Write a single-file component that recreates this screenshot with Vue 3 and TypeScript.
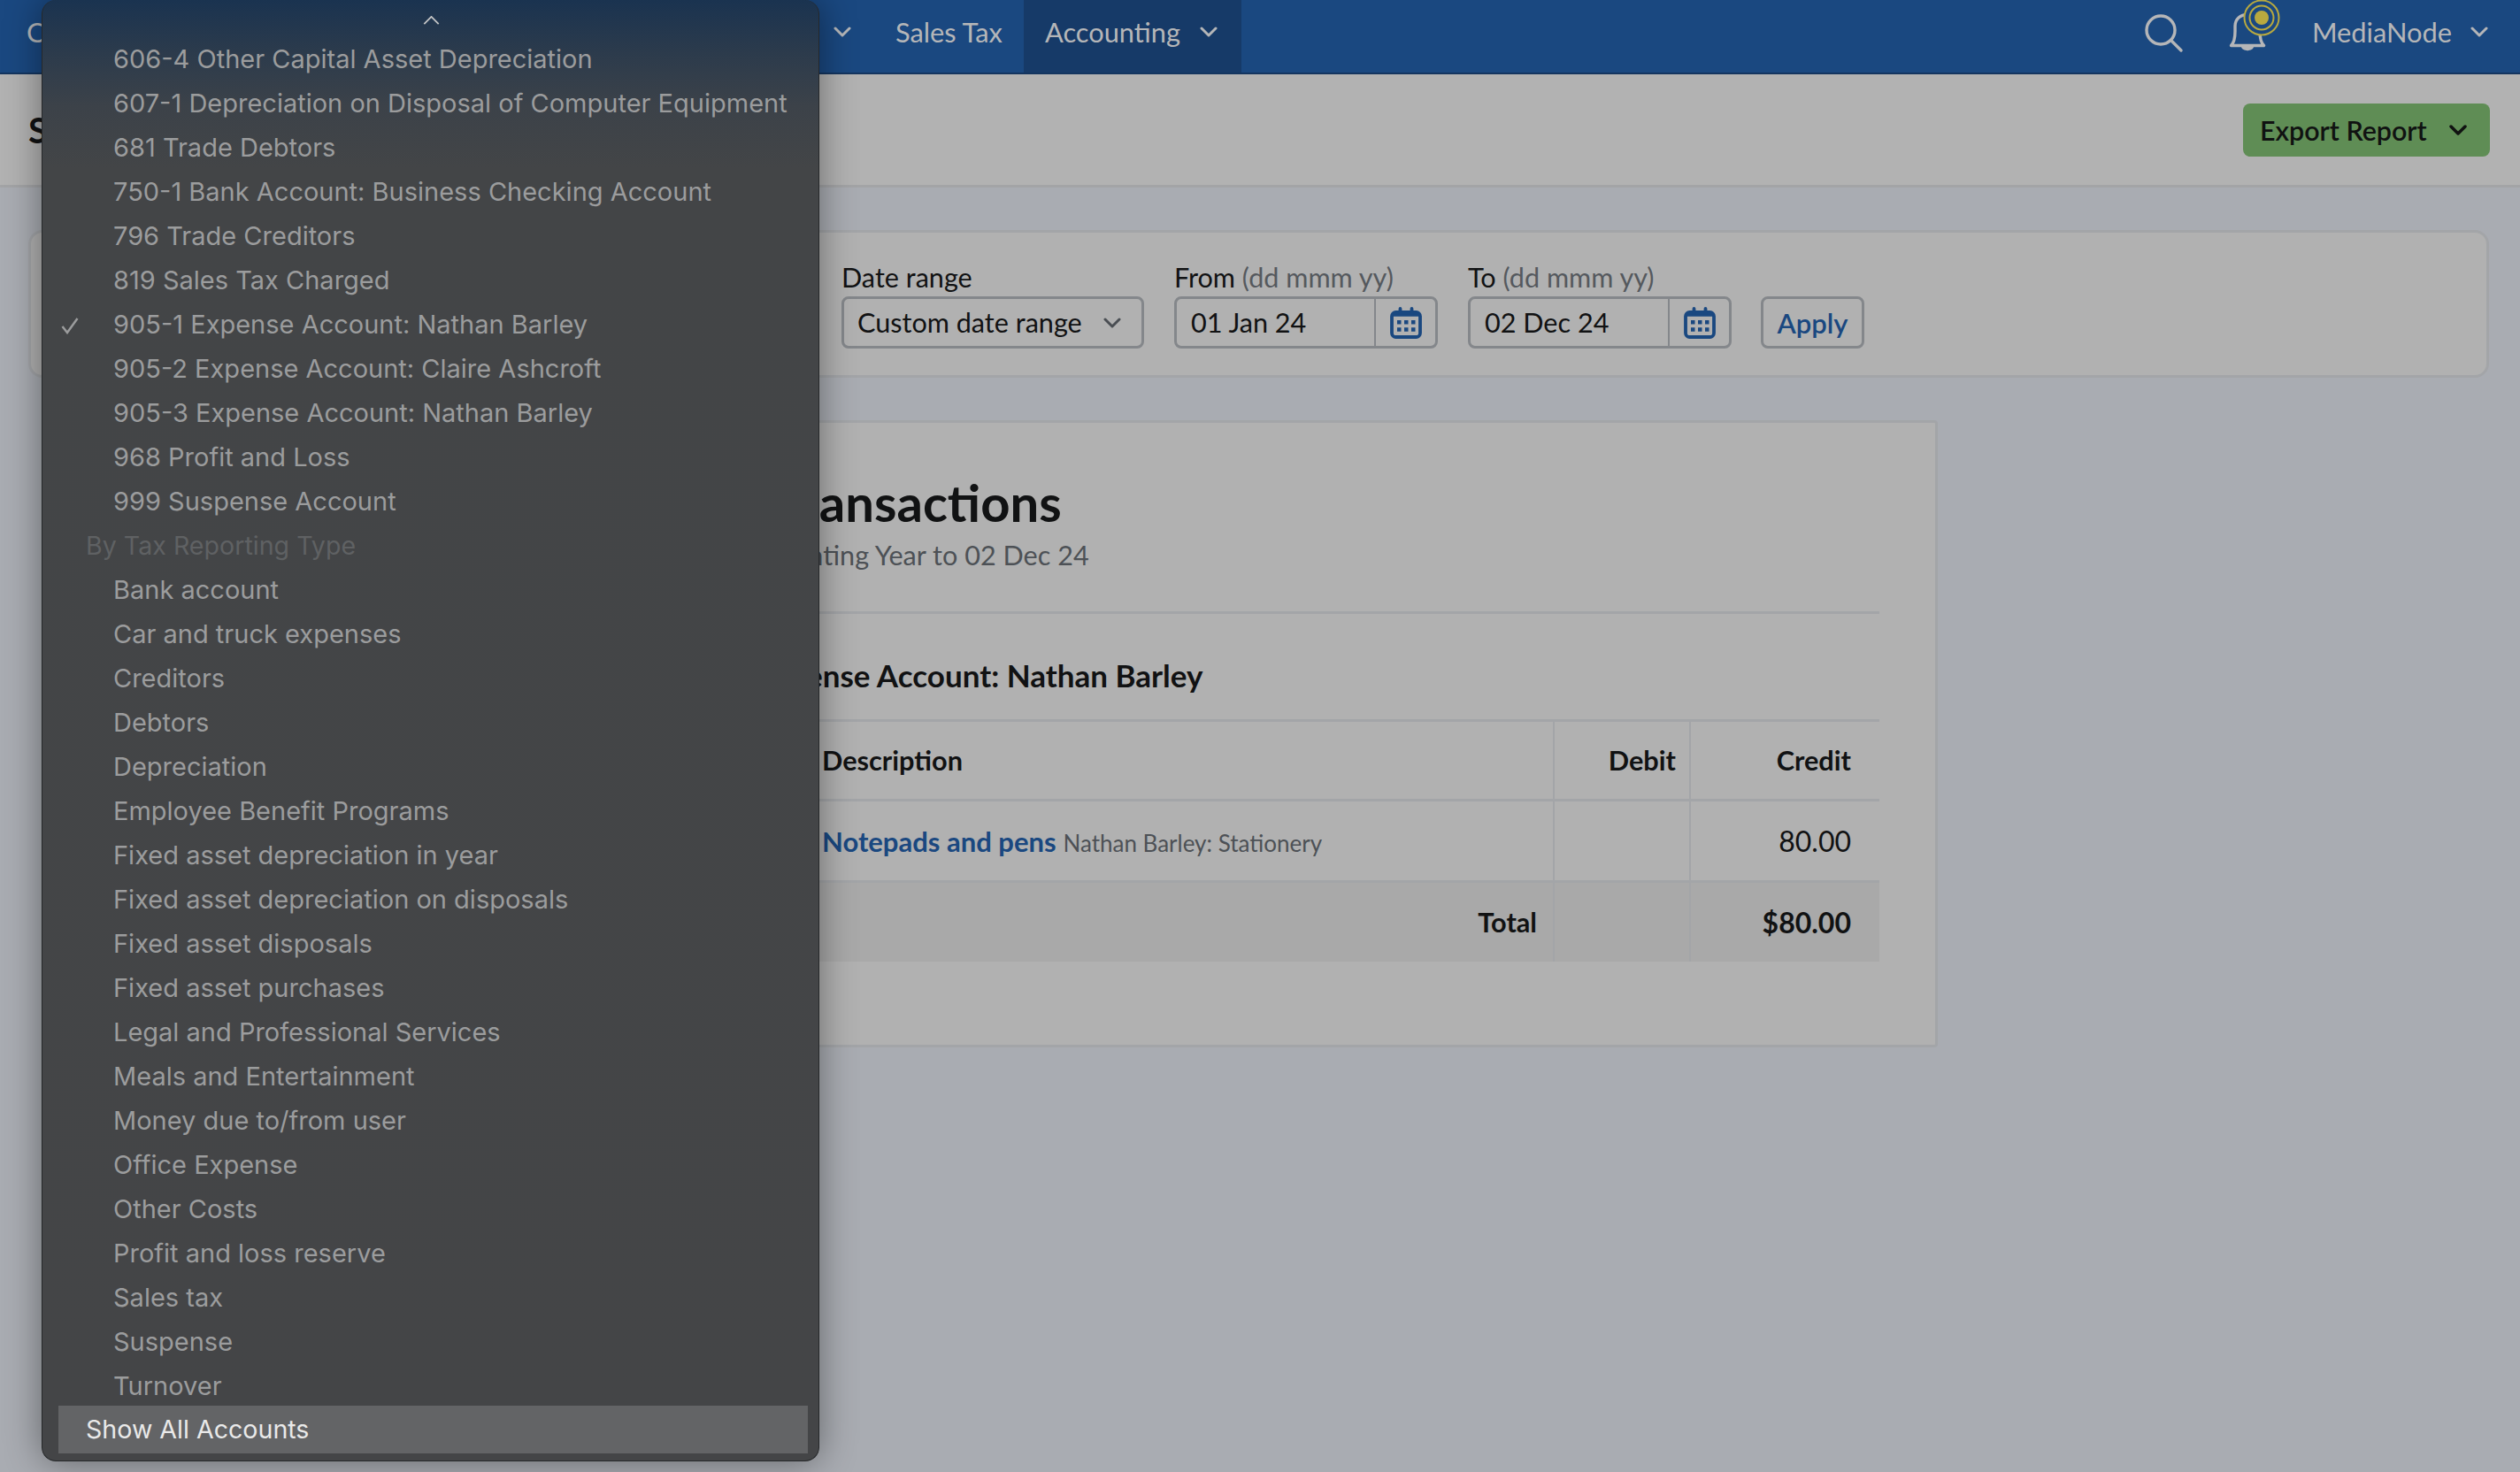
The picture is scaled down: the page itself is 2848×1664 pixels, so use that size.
<script setup lang="ts">
interface MenuRow { label: string; kind: 'item' | 'header' | 'checked' }
const names: string[] = [
  '606-4 Other Capital Asset Depreciation',
  '607-1 Depreciation on Disposal of Computer Equipment',
  '681 Trade Debtors',
  '750-1 Bank Account: Business Checking Account',
  '796 Trade Creditors',
  '819 Sales Tax Charged',
  '905-1 Expense Account: Nathan Barley',
  '905-2 Expense Account: Claire Ashcroft',
  '905-3 Expense Account: Nathan Barley',
  '968 Profit and Loss',
  '999 Suspense Account',
  'By Tax Reporting Type',
  'Bank account',
  'Car and truck expenses',
  'Creditors',
  'Debtors',
  'Depreciation',
  'Employee Benefit Programs',
  'Fixed asset depreciation in year',
  'Fixed asset depreciation on disposals',
  'Fixed asset disposals',
  'Fixed asset purchases',
  'Legal and Professional Services',
  'Meals and Entertainment',
  'Money due to/from user',
  'Office Expense',
  'Other Costs',
  'Profit and loss reserve',
  'Sales tax',
  'Suspense',
  'Turnover',
]
const rows: MenuRow[] = names.map((label) => ({
  label,
  kind: label.startsWith('By Tax') ? 'header' : label === '905-1 Expense Account: Nathan Barley' ? 'checked' : 'item',
}))
</script>

<template>
  <div class="page">
    <header class="nav">
      <div class="nav-hidden">
        <span class="nav-text">Contacts</span>
        <svg class="nav-chev" viewBox="0 0 20 12"><path d="M2 2l8 8 8-8" /></svg>
      </div>
      <span class="nav-item nav-text">Sales Tax</span>
      <span class="nav-item active nav-text">
        Accounting
        <svg class="nav-chev" viewBox="0 0 20 12"><path d="M2 2l8 8 8-8" /></svg>
      </span>
      <div class="nav-right">
        <svg class="search" viewBox="0 0 44 44"><circle cx="18" cy="18" r="16" /><path d="M29.500 29.500L41 41" /></svg>
        <svg class="bell" viewBox="0 0 48 60">
          <path class="bell-body" d="M1.500 51.500c3-3 4.500-7 4.500-16v-6c0-8 6-13 14-13s14 5 14 13v6c0 9 1.500 13 4.500 16z" />
          <path class="bell-clap" d="M13 53c1 5.500 13 5.500 14 0z" />
          <circle class="ring outer" cx="36" cy="20" r="19.500" />
          <circle class="ring" cx="36" cy="20" r="13.500" />
          <circle class="dot" cx="36" cy="20" r="8" />
        </svg>
        <span class="user nav-text">MediaNode</span>
        <svg class="nav-chev" viewBox="0 0 20 12"><path d="M2 2l8 8 8-8" /></svg>
      </div>
    </header>

    <section class="subhead">
      <h1 class="subhead-title">Statements</h1>
      <button class="export">
        Export Report
        <svg class="export-chev" viewBox="0 0 20 12"><path d="M2 2l8 8 8-8" /></svg>
      </button>
    </section>

    <section class="filters">
      <div class="field account">
        <label class="label">Account</label>
        <div class="select"><span>905-1 Expense Account</span></div>
      </div>
      <div class="field">
        <label class="label">Date range</label>
        <div class="select range">
          <span>Custom date range</span>
          <svg class="sel-chev" viewBox="0 0 20 12"><path d="M2 2l8 8 8-8" /></svg>
        </div>
      </div>
      <div class="field">
        <label class="label">From <em>(dd mmm yy)</em></label>
        <div class="date">
          <span class="date-value">01 Jan 24</span>
          <span class="date-btn">
            <svg class="cal" viewBox="0 0 36 36"><rect x="2" y="6" width="32" height="28" rx="4.500" /><path class="cal-top" d="M3 8.500h30" /><path class="cal-pins" d="M11.500 2v6M24.500 2v6" /><path class="cal-dots" d="M8 17.300h4.500M16 17.300h4.500M24 17.300h4.500M8 25.500h4.500M16 25.500h4.500M24 25.500h4.500" /></svg>
          </span>
        </div>
      </div>
      <div class="field">
        <label class="label">To <em>(dd mmm yy)</em></label>
        <div class="date">
          <span class="date-value">02 Dec 24</span>
          <span class="date-btn">
            <svg class="cal" viewBox="0 0 36 36"><rect x="2" y="6" width="32" height="28" rx="4.500" /><path class="cal-top" d="M3 8.500h30" /><path class="cal-pins" d="M11.500 2v6M24.500 2v6" /><path class="cal-dots" d="M8 17.300h4.500M16 17.300h4.500M24 17.300h4.500M8 25.500h4.500M16 25.500h4.500M24 25.500h4.500" /></svg>
          </span>
        </div>
      </div>
      <button class="apply">Apply</button>
    </section>

    <main class="report">
      <h2 class="report-title">Account Transactions</h2>
      <p class="report-sub">Start of Accounting Year to 02 Dec 24</p>
      <h3 class="report-account">905-1 Expense Account: Nathan Barley</h3>
      <table class="table">
        <thead>
          <tr>
            <th class="c-date">Date</th>
            <th class="c-desc">Description</th>
            <th class="c-debit num">Debit</th>
            <th class="c-credit num">Credit</th>
          </tr>
        </thead>
        <tbody>
          <tr>
            <td class="c-date">12 Mar 24</td>
            <td class="c-desc"><a class="link">Notepads and pens</a> <small>Nathan Barley: Stationery</small></td>
            <td class="c-debit num"></td>
            <td class="c-credit num digits">80.00</td>
          </tr>
        </tbody>
        <tfoot>
          <tr>
            <td colspan="2" class="num">Total</td>
            <td class="c-debit num"></td>
            <td class="c-credit num digits">$80.00</td>
          </tr>
        </tfoot>
      </table>
    </main>

    <div class="menu">
      <svg class="menu-up" viewBox="0 0 20 11"><path d="M1 10l9-9 9 9" /></svg>
      <ul class="menu-list">
        <li v-for="row in rows" :key="row.label" class="menu-row" :class="row.kind">
          <svg v-if="row.kind === 'checked'" class="check" viewBox="0 0 20 20"><path d="M1.500 11l5.500 7L18.500 2" /></svg>
          {{ row.label }}
        </li>
      </ul>
      <div class="menu-current">Show All Accounts</div>
    </div>
  </div>
</template>

<style>
html, body { margin: 0; background: #a9acb2; }
</style>

<style scoped>
.page {
  position: relative;
  width: 2848px;
  height: 1664px;
  overflow: hidden;
  background: #a9acb2;
  font-family: "Lato", "Liberation Sans", sans-serif;
  font-size: 30.6px;
  color: #111213;
}
.nav {
  height: 84px;
  box-sizing: border-box;
  display: flex;
  align-items: stretch;
  background: #1a4880;
  border-bottom: 2px solid #14355f;
  color: #b5b6b8;
}
.nav-text { font-size: 30.8px; }
.nav-hidden {
  width: 988px;
  padding: 0 26px 10px 30px;
  box-sizing: border-box;
  display: flex;
  align-items: center;
  justify-content: space-between;
}
.nav-chev {
  width: 20px;
  height: 12px;
  fill: none;
  stroke: #b5b6b8;
  stroke-width: 3;
  stroke-linecap: round;
  stroke-linejoin: round;
}
.nav-item {
  display: flex;
  align-items: center;
  gap: 22px;
  padding: 0 24px 10px;
}
.nav-item.active { background: #163a68; padding-right: 27px; }
.nav-right {
  margin-left: auto;
  padding: 0 36px 10px 0;
  display: flex;
  align-items: center;
}
.search {
  width: 44px;
  height: 44px;
  fill: none;
  stroke: #b5b6b8;
  stroke-width: 3.4;
  stroke-linecap: round;
  margin: 4px 52px 0 0;
}
.bell {
  width: 48px;
  height: 60px;
  display: block;
  overflow: visible;
  align-self: flex-start;
  margin-right: 45px;
}
.bell-body { fill: none; stroke: #b5b6b8; stroke-width: 3.4; stroke-linejoin: round; }
.bell-clap { fill: #b5b6b8; }
.ring { fill: none; stroke: #b8a93f; stroke-width: 2; }
.ring.outer { fill: #1a4880; }
.dot { fill: #b8a93f; }
.user { margin-right: 21px; }

.subhead {
  height: 128px;
  border-bottom: 3px solid #a3a4a6;
  background: #b2b2b2;
  display: flex;
  align-items: center;
  justify-content: space-between;
  padding: 0 34px 0 32px;
  box-sizing: border-box;
}
.subhead-title { margin: 0; font-size: 40px; font-weight: 700; }
.export {
  width: 279px;
  height: 60px;
  border: 0;
  border-radius: 8px;
  background: #5f8d55;
  color: #101211;
  font: 600 30.400px "Lato", sans-serif;
  display: flex;
  align-items: center;
  justify-content: space-between;
  padding: 0 26px 0 19px;
  box-sizing: border-box;
}
.export-chev {
  width: 20px;
  height: 12px;
  fill: none;
  stroke: #101211;
  stroke-width: 3.5;
  stroke-linecap: round;
  stroke-linejoin: round;
}

.filters {
  margin: 48px 35px 0 32px;
  height: 167px;
  box-sizing: border-box;
  padding: 31px 0 0 32px;
  background: #b1b1b1;
  border: 3px solid #a3a5a8;
  border-radius: 16px;
  display: flex;
  align-items: flex-start;
  gap: 34px;
}
.field { display: flex; flex-direction: column; }
.field.account { width: 850px; }
.label { height: 41px; line-height: 40px; white-space: nowrap; }
.label em { font-style: normal; color: #55595e; }
.select {
  height: 59px;
  box-sizing: border-box;
  border: 3px solid #84878b;
  border-radius: 8px;
  display: flex;
  align-items: center;
  padding: 0 15px;
  white-space: nowrap;
}
.select.range { width: 342px; justify-content: space-between; padding-right: 23px; }
.sel-chev {
  width: 20px;
  height: 12px;
  fill: none;
  stroke: #4a4e53;
  stroke-width: 3;
  stroke-linecap: round;
  stroke-linejoin: round;
}
.date {
  width: 298px;
  height: 59px;
  box-sizing: border-box;
  border: 3px solid #84878b;
  border-radius: 8px;
  display: flex;
  align-items: center;
}
.date-value { flex: 1; padding-left: 16px; white-space: nowrap; }
.date-btn {
  width: 67px;
  height: 100%;
  border-left: 2px solid #84878b;
  display: flex;
  align-items: center;
  justify-content: center;
}
.cal { width: 36px; height: 36px; fill: none; stroke: #1a4880; stroke-width: 3.8; }
.cal-top { stroke-width: 4.5; }
.cal-pins { stroke-width: 3.8; stroke-linecap: round; }
.cal-dots { stroke-width: 4.5; }
.apply {
  margin-top: 41px;
  margin-left: -1px;
  width: 117px;
  height: 59px;
  box-sizing: border-box;
  border: 3px solid #84878b;
  border-radius: 8px;
  background: transparent;
  color: #1a4880;
  font: 600 31px "Lato", sans-serif;
}

.report {
  width: 1532px;
  height: 709px;
  margin: 48px 0 0 658px;
  box-sizing: border-box;
  padding: 58px 63px 0;
  background: #b1b1b1;
  border: 3px solid #a3a5a8;
  border-radius: 4px;
}
.report-title { margin: 0 0 0 -75px; font-size: 58px; line-height: 64px; font-weight: 700; }
.report-sub {
  margin: 8px 0 0;
  line-height: 40px;
  color: #4d5156;
  padding-bottom: 43px;
  border-bottom: 3px solid #a3a5a8;
}
.report-account {
  margin: 0;
  padding: 20px 0 0 26px;
  height: 119px;
  box-sizing: border-box;
  line-height: 99px;
  font-size: 35px;
  font-weight: 700;
}
.table {
  width: 100%;
  border-collapse: collapse;
  table-layout: fixed;
  font-size: 30.7px;
}
.table th, .table td {
  padding: 0 18px 0 0;
  box-sizing: border-box;
  border-top: 3px solid #a3a5a8;
  text-align: left;
  white-space: nowrap;
}
.table th { height: 90px; font-weight: 700; }
.table tbody td { height: 92px; }
.table tfoot td { height: 90px; background: #a9a9a9; font-weight: 700; }
.c-date { width: 205px; }
.c-debit { width: 154px; border-left: 2px solid #a3a5a8; }
.c-credit { width: 214px; border-left: 2px solid #a3a5a8; }
.table .c-debit { padding-right: 15px; }
.table .c-credit { padding-right: 32px; }
.table .num { text-align: right; }
.table .digits { font-size: 32px; }
.link { color: #1a4880; font-weight: 700; font-size: 31px; }
small { font-size: 26px; color: #4d5156; }

.menu {
  position: absolute;
  left: 47px;
  top: 0;
  width: 879px;
  height: 1652px;
  box-sizing: border-box;
  border: 1px solid #26282a;
  border-top: 0;
  border-radius: 16px;
  background: linear-gradient(180deg, #1a3350 0, #2c3b4c 60px, #3c4249 120px, #434547 190px, #444547 100%);
  box-shadow: 0 0 42px rgba(0, 0, 0, 0.42);
  font-family: "Inter", "Liberation Sans", sans-serif;
  font-size: 29px;
  color: #9b9c9d;
}
.menu-up {
  position: absolute;
  left: 430px;
  top: 18px;
  width: 19px;
  height: 10px;
  fill: none;
  stroke: #c4c5c6;
  stroke-width: 2;
}
.menu-list { list-style: none; margin: 0; padding: 42px 0 0; }
.menu-row {
  position: relative;
  height: 50px;
  line-height: 50px;
  padding-left: 80px;
  white-space: nowrap;
}
.menu-row.header { padding-left: 49px; font-size: 28.6px; color: #5f6163; }
.check {
  position: absolute;
  left: 21px;
  top: 16px;
  width: 20px;
  height: 20px;
  fill: none;
  stroke: #9b9c9d;
  stroke-width: 2.5;
}
.menu-current {
  margin: -3px 12px 0 18px;
  height: 54px;
  line-height: 54px;
  padding-left: 31px;
  font-size: 28.6px;
  background: #636466;
  color: #e9e9e9;
}
</style>
